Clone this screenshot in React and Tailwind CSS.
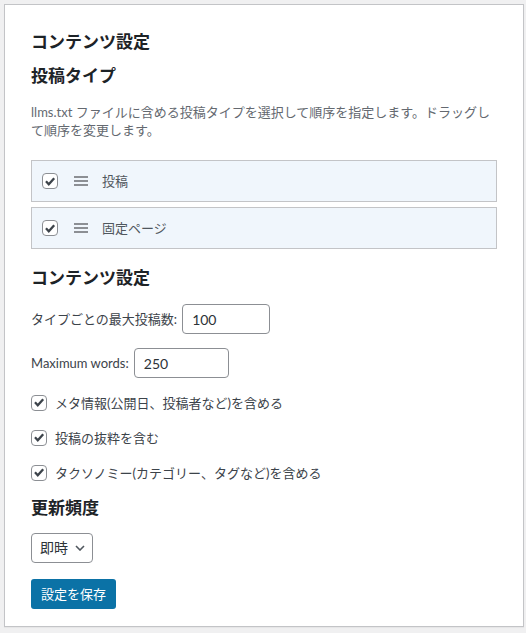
import React from "react";

const FONT = { fontFamily: '"Lato", "Noto Sans CJK JP", sans-serif' };

function Check() {
  return (
    <span className="flex h-4 w-4 shrink-0 items-center justify-center rounded-[4px] border border-[#8c8f94] bg-white">
      <svg viewBox="0 0 16 16" className="h-[15px] w-[15px]">
        <path d="M3.4 7.8 L6.6 11.2 L12.8 4.2" fill="none" stroke="#3c434a" strokeWidth="2.6" strokeLinecap="butt" strokeLinejoin="miter" />
      </svg>
    </span>
  );
}

function Grip() {
  return (
    <svg viewBox="0 0 14 10" className="h-[10px] w-[14px] shrink-0">
      <rect x="0" y="0" width="14" height="2" fill="#8c8f94" />
      <rect x="0" y="4" width="14" height="2" fill="#8c8f94" />
      <rect x="0" y="8" width="14" height="2" fill="#8c8f94" />
    </svg>
  );
}

function SortRow({ label }) {
  return (
    <div className="flex h-[42px] items-center border border-[#c3c4c7] bg-[#f0f6fc] pl-[10px]">
      <Check />
      <span className="ml-4">
        <Grip />
      </span>
      <span className="ml-[14px] text-[13px] leading-[18px] text-[#50575e]">{label}</span>
    </div>
  );
}

function CheckRow({ label }) {
  return (
    <div className="flex h-[35px] items-center">
      <Check />
      <span className="ml-2 text-[13px] leading-[18px] text-[#3c434a]">{label}</span>
    </div>
  );
}

export default function App() {
  return (
    <div className="min-h-[633px] bg-[#f0f0f1] p-1" style={FONT}>
      <div className="w-[520px] border border-[#c3c4c7] bg-white px-[26px] pt-[26px] pb-[17px] shadow-[0_1px_1px_rgba(0,0,0,0.04)]">
        <h2 className="text-[17px] font-bold leading-[22px] text-[#1d2327]">コンテンツ設定</h2>
        <h2 className="mt-3 text-[17px] font-bold leading-[22px] text-[#1d2327]">投稿タイプ</h2>
        <p className="mt-4 text-[13px] leading-[18px] text-[#646970]">
          llms.txt ファイルに含める投稿タイプを選択して順序を指定します。ドラッグして順序を変更します。
        </p>
        <div className="mt-[21px] flex flex-col gap-[5px]">
          <SortRow label="投稿" />
          <SortRow label="固定ページ" />
        </div>
        <h2 className="mt-[18px] text-[17px] font-bold leading-[22px] text-[#1d2327]">コンテンツ設定</h2>
        <div className="mt-[15px] flex items-center">
          <span className="text-[13px] leading-[18px] text-[#3c434a]">タイプごとの最大投稿数:</span>
          <div className="ml-[5px] flex h-[30px] w-[88px] items-center rounded-[4px] border border-[#8c8f94] px-[9px] text-[14px] text-[#2c3338]">
            100
          </div>
        </div>
        <div className="mt-[14px] flex items-center">
          <span className="text-[13px] leading-[18px] text-[#3c434a]">Maximum words:</span>
          <div className="ml-[5px] flex h-[30px] w-[95px] items-center rounded-[4px] border border-[#8c8f94] px-[9px] text-[14px] text-[#2c3338]">
            250
          </div>
        </div>
        <div className="mt-[7px] flex flex-col">
          <CheckRow label="メタ情報(公開日、投稿者など)を含める" />
          <CheckRow label="投稿の抜粋を含む" />
          <CheckRow label="タクソノミー(カテゴリー、タグなど)を含める" />
        </div>
        <h2 className="mt-[7px] text-[17px] font-bold leading-[22px] text-[#1d2327]">更新頻度</h2>
        <div className="mt-[14px] flex h-[30px] w-[62px] items-center rounded-[4px] border border-[#8c8f94] pl-[8px] text-[14px] text-[#2c3338]">
          <span className="leading-[18px]">即時</span>
          <svg viewBox="0 0 10 6" className="ml-[7px] h-[6px] w-[10px]">
            <path d="M1 1 L5 5 L9 1" fill="none" stroke="#50575e" strokeWidth="1.6" />
          </svg>
        </div>
        <button className="mt-4 flex h-[30px] items-center rounded-[3px] bg-[#0b72a6] px-[10px] text-[13px] leading-[18px] text-white">
          設定を保存
        </button>
      </div>
    </div>
  );
}
